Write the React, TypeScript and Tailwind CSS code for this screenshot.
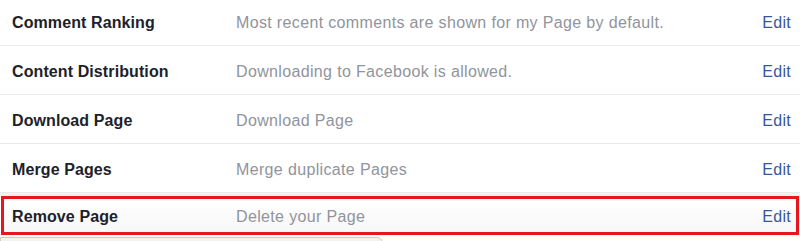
const rows = [
  { label: "Comment Ranking", desc: "Most recent comments are shown for my Page by default." },
  { label: "Content Distribution", desc: "Downloading to Facebook is allowed." },
  { label: "Download Page", desc: "Download Page" },
  { label: "Merge Pages", desc: "Merge duplicate Pages" },
];

const Row = ({ label, desc }: { label: string; desc: string }) => (
  <div className="flex h-[49px] items-center border-b border-[#e9eaed] pt-[3px]">
    <div className="w-[236px] pl-[12px] text-[16px] font-bold tracking-[0.1px] text-[#1d2129]">{label}</div>
    <div className="flex-1 text-[16px] tracking-[0.35px] text-[#90949c]">{desc}</div>
    <a href="#" className="pr-[9px] text-[16px] tracking-[0.3px] text-[#365899]">Edit</a>
  </div>
);

export default function App() {
  return (
    <div className="h-[241px] w-[800px] overflow-hidden bg-white" style={{ fontFamily: '"Liberation Sans", Arial, sans-serif' }}>
      <div className="-mt-[3px]">
        {rows.map((r) => (
          <Row key={r.label} {...r} />
        ))}
      </div>
      <div className="h-[3px] bg-[#f0f1f3]" />
      <div className="mx-[1px] flex h-[39px] items-center border-[3px] border-[#e8141e] bg-gradient-to-b from-white to-[#f7f7f8] pt-[2px]">
        <div className="w-[232px] pl-[8px] text-[16px] font-bold tracking-[0.1px] text-[#1d2129]">Remove Page</div>
        <div className="flex-1 text-[16px] tracking-[0.35px] text-[#90949c]">Delete your Page</div>
        <a href="#" className="pr-[5px] text-[16px] tracking-[0.3px] text-[#365899]">Edit</a>
      </div>
      <div className="mt-[2px] h-[10px] w-[383px] rounded-tr-[6px] border border-[#c9ccd1] bg-[#f2f2f2]" />
    </div>
  );
}
